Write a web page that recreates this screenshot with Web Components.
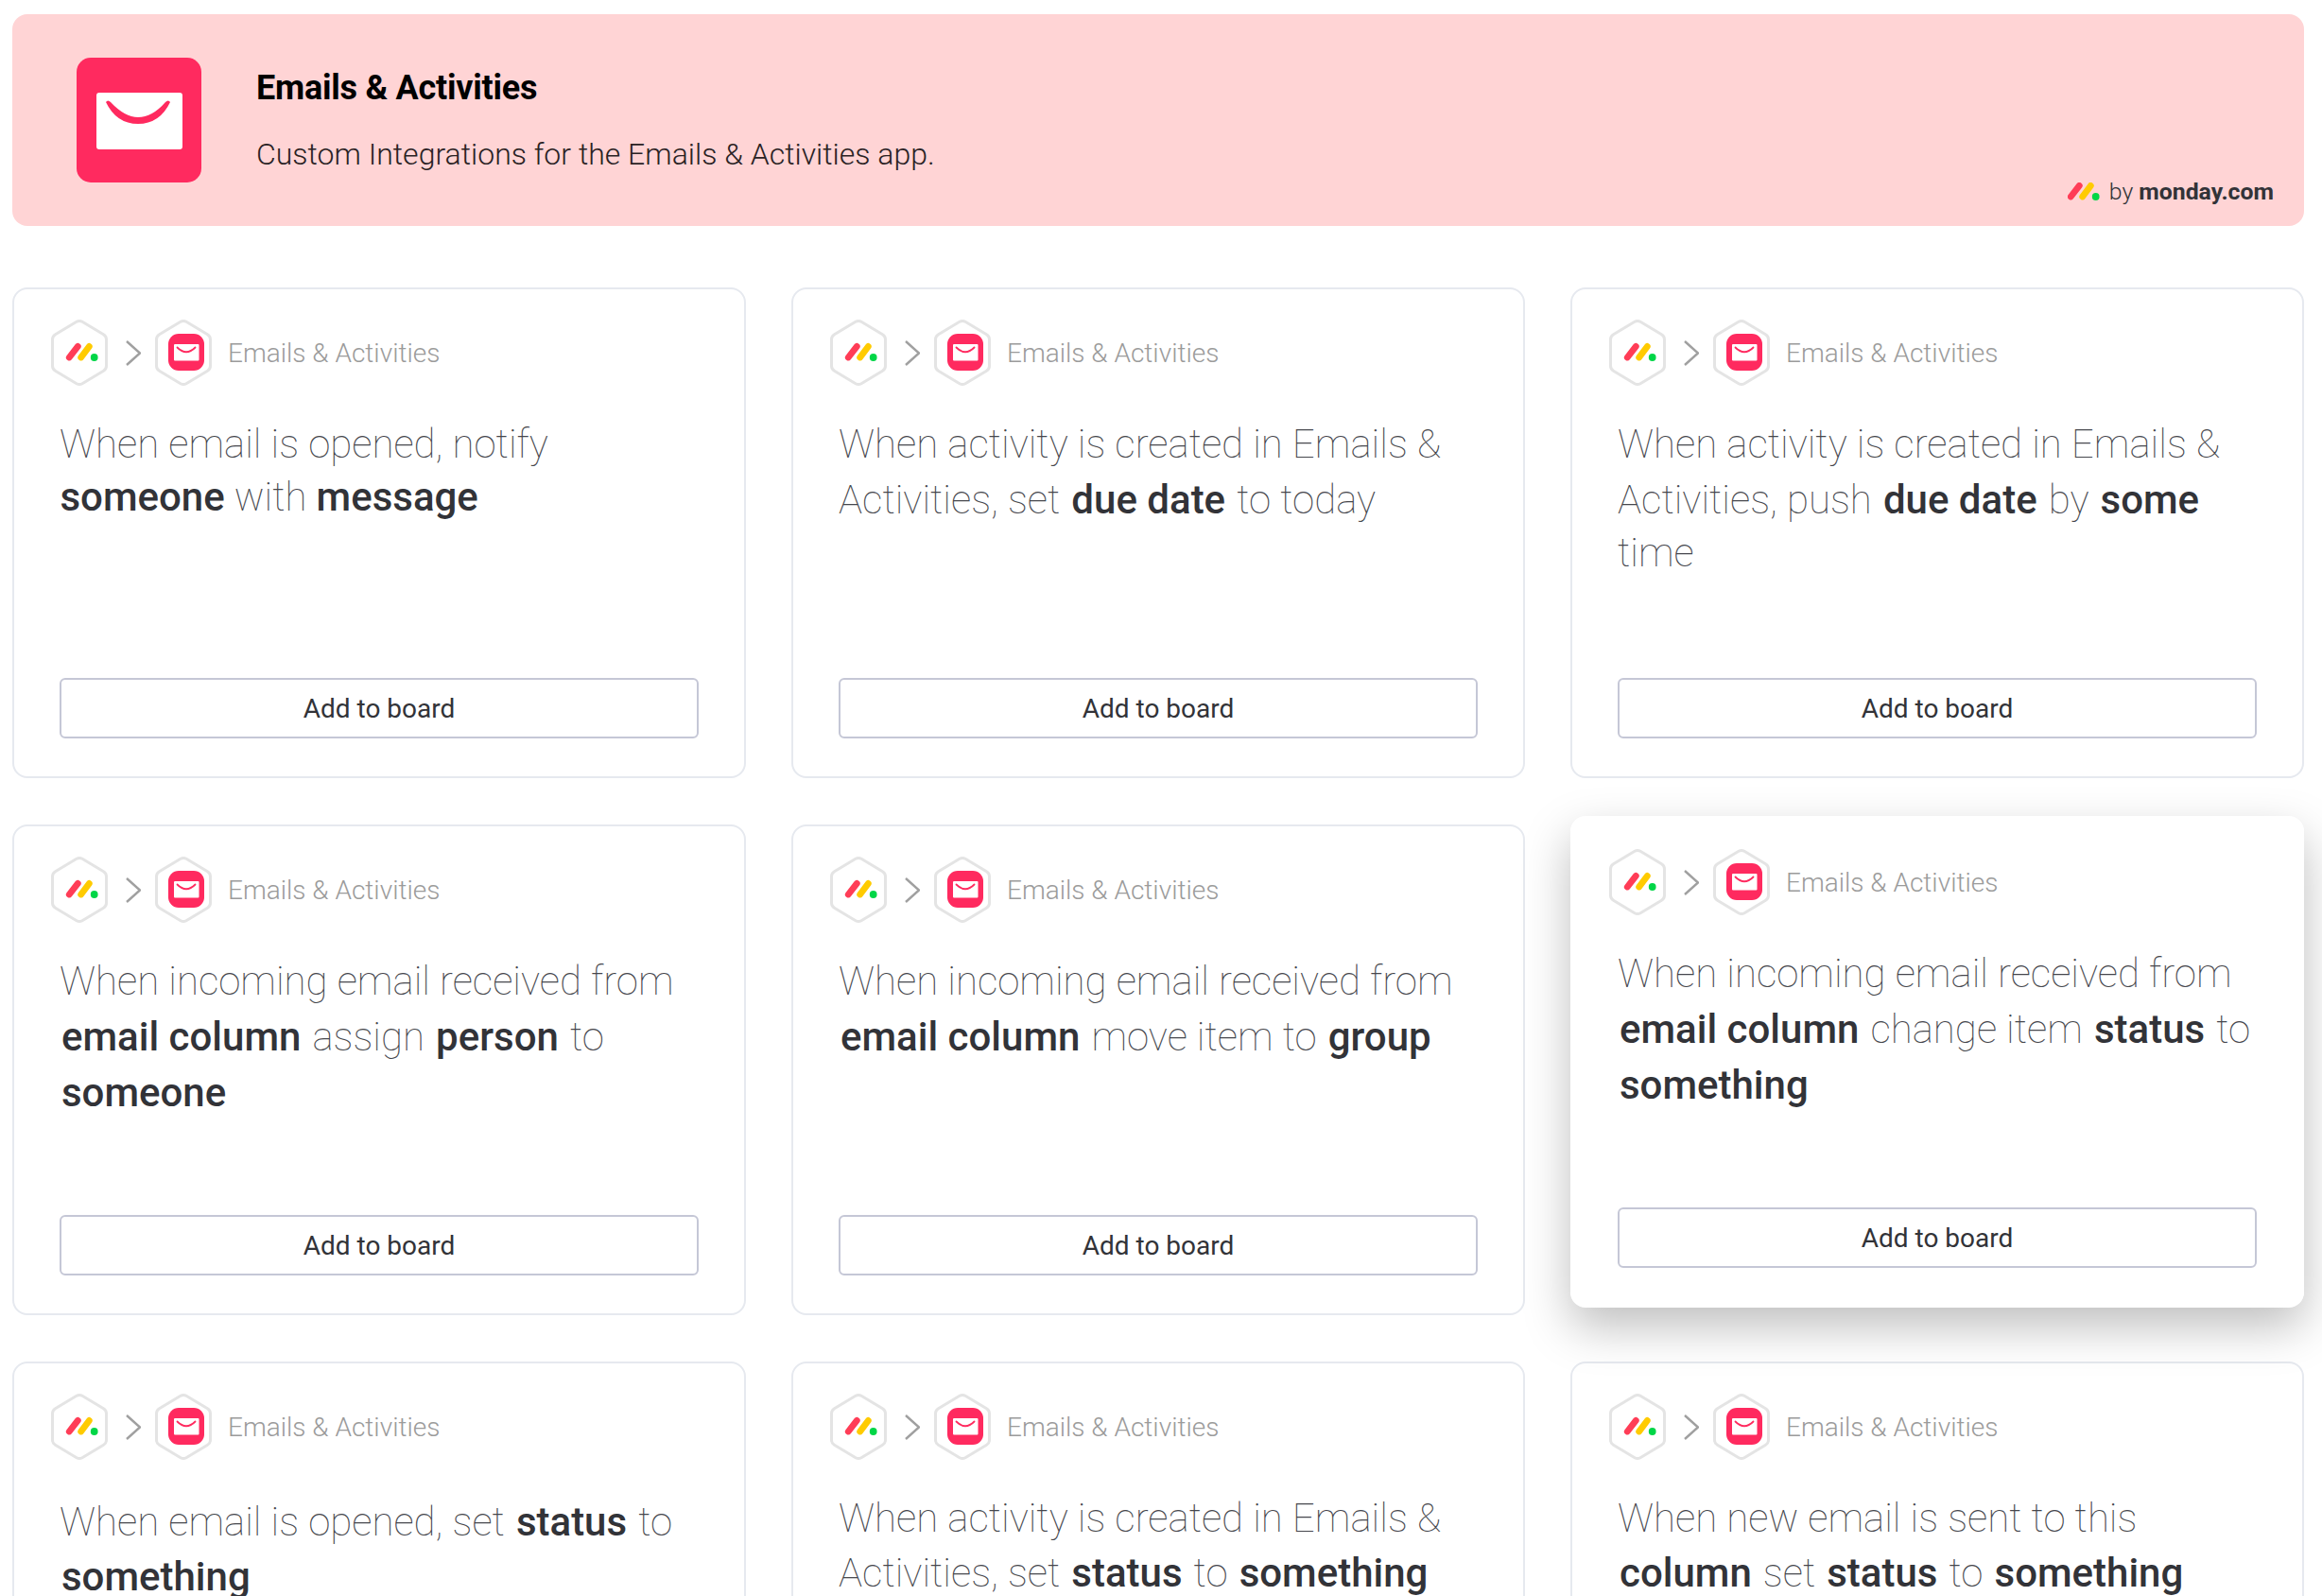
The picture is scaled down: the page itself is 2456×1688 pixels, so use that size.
<!DOCTYPE html>
<html>
<head>
<meta charset="utf-8">
<title>Emails &amp; Activities</title>
<style>
  html, body { margin: 0; height: 100%; overflow: hidden; background: #fff; }
  body { font-family: Roboto, "Liberation Sans", sans-serif; color: #323338; }
</style>
</head>
<body>
<integrations-page>
  <integrations-banner slot="banner" name="Emails &amp; Activities">Custom Integrations for the Emails &amp; Activities app.</integrations-banner>

  <recipe-card>When email is opened, notify <b class="n">someone</b> with <b>message</b></recipe-card>
  <recipe-card>When activity is created in Emails &amp; Activities, set <b class="t">due date</b> to today</recipe-card>
  <recipe-card>When activity is created in Emails &amp; Activities, push <b class="t">due date</b> by <b class="t">some</b> time</recipe-card>

  <recipe-card>When incoming email received from <b class="t">email column</b> assign <b class="t">person</b> to <b class="t">someone</b></recipe-card>
  <recipe-card>When incoming email received from <b class="t">email column</b> move item to <b class="t">group</b></recipe-card>
  <recipe-card raised>When incoming email received from <b class="t">email column</b> change item <b class="t">status</b> to <b class="t">something</b></recipe-card>

  <recipe-card>When email is opened, set <b class="u">status</b> to <b class="s">something</b></recipe-card>
  <recipe-card>When activity is created in Emails &amp; Activities, set <b class="m">status</b> to <b class="m">something</b></recipe-card>
  <recipe-card>When new email is sent to this <b class="m">column</b> set <b class="m">status</b> to <b class="m">something</b></recipe-card>
</integrations-page>

<script>
const ENVELOPE = `
  <rect x="14" y="15" width="38" height="39" rx="11" fill="#ff2a5f"/>
  <rect x="20" y="26" width="26.5" height="17.5" rx="1" fill="#fff"/>
  <path d="M23.5 29.5Q33 39 42.5 29.5" fill="none" stroke="#ff2a5f" stroke-width="1.8" stroke-linecap="round"/>`;

const MONDAY = `
  <path d="M3.3 15 12.3 3.4" stroke="#ff3d57" stroke-width="6.8" stroke-linecap="round"/>
  <path d="M15.7 15 24.3 3.4" stroke="#ffcb00" stroke-width="6.8" stroke-linecap="round"/>
  <circle cx="29.7" cy="15" r="3.9" fill="#00d647"/>`;

class AppBadge extends HTMLElement {
  connectedCallback() {
    const inner = this.getAttribute('kind') === 'monday'
      ? `<g transform="translate(16 25)">${MONDAY}</g>`
      : ENVELOPE;
    this.attachShadow({ mode: 'open' }).innerHTML = `
      <style>
        :host { display: block; width: 60px; height: 70px; flex: none; }
        svg { display: block; overflow: visible; }
      </style>
      <svg width="60" height="70" viewBox="0 0 60 70">
        <path d="M27 2.300Q30 .5 33 2.300L55.500 15.800Q58.500 17.600 58.500 21V49Q58.500 52.400 55.500 54.200L33 67.700Q30 69.500 27 67.700L4.500 54.200Q1.500 52.400 1.500 49V21Q1.500 17.600 4.500 15.800Z" fill="#fff" stroke="#e4e4e4" stroke-width="3"/>
        ${inner}
      </svg>`;
  }
}

class RecipeCard extends HTMLElement {
  constructor() {
    super();
    this.attachShadow({ mode: 'open' }).innerHTML = `
      <style>
        :host {
          display: flex;
          flex-direction: column;
          box-sizing: border-box;
          height: 519px;
          padding: 32px 48px 40px;
          background: #fff;
          border: 2px solid #e6e9ef;
          border-radius: 16px;
        }
        :host([raised]) {
          position: relative;
          transform: translateY(-8px);
          border-color: #fff;
          box-shadow: 0 -1px 0 #fff, 0 20px 50px rgba(0, 0, 0, .26);
        }
        .head { display: flex; align-items: center; margin-left: -9px; }
        .chevron { display: block; margin: 0 15px 0 19px; flex: none; }
        .app { margin-left: 17px; font-size: 28px; font-weight: 300; color: #9b9b9b; }
        .text { margin-top: 34px; font-size: 42px; line-height: 56px; font-weight: 100; color: #46474d; }
        ::slotted(b) { font-weight: 500; color: #323338; }
        ::slotted(b.n) { padding-left: .5px; }
        ::slotted(b.t) { display: inline-block; padding: 3px 2px 0; }
        ::slotted(b.u) { display: inline-block; padding: 4px 2px 0; }
        ::slotted(b.m) { display: inline-block; padding: 2px 2px 0; }
        ::slotted(b.s) { display: inline-block; padding: 2px 2px 0; }
        button {
          display: block;
          width: 100%;
          height: 64px;
          margin-top: auto;
          padding: 0;
          background: #fff;
          border: 2px solid #c5c7d6;
          border-radius: 6px;
          font: 400 28px Roboto, "Liberation Sans", sans-serif;
          color: #323338;
        }
      </style>
      <div class="head">
        <app-badge kind="monday"></app-badge>
        <svg class="chevron" width="16" height="27" viewBox="0 0 16 27"><path d="M1 1 15 13.500 1 26" fill="none" stroke="#a0a0a0" stroke-width="2.400"/></svg>
        <app-badge kind="emails"></app-badge>
        <span class="app">Emails &amp; Activities</span>
      </div>
      <div class="text"><slot></slot></div>
      <button type="button">Add to board</button>`;
  }
}

class IntegrationsBanner extends HTMLElement {
  constructor() {
    super();
    this.attachShadow({ mode: 'open' });
  }

  connectedCallback() {
    this.shadowRoot.innerHTML = `
      <style>
        :host {
          display: flex;
          align-items: center;
          box-sizing: border-box;
          height: 224px;
          padding: 0 32px 0 68px;
          background: #ffd4d5;
          border-radius: 16px;
          color: #000;
        }
        .icon { display: block; flex: none; }
        .copy { margin-left: 58px; display: flex; flex-direction: column; gap: 28px; margin-bottom: 1px; }
        h1 { margin: 0; font-size: 36px; line-height: 44px; font-weight: 700; letter-spacing: -.25px; }
        p { margin: 0; font-size: 32px; line-height: 40px; font-weight: 300; color: #2a2224; }
        .by { display: flex; align-items: center; margin-left: auto; align-self: flex-end; margin-bottom: 21px; font-size: 24.8px; line-height: 30px; font-weight: 300; color: #323338; }
        .by svg { margin-right: 10px; }
        .by b { font-weight: 700; }
      </style>
      <svg class="icon" width="132" height="132" viewBox="0 0 132 132">
        <rect width="132" height="132" rx="15" fill="#ff2a5f"/>
        <rect x="21" y="37" width="91" height="60" rx="3" fill="#fff"/>
        <path d="M31 47Q33 44 36 47Q51 63 65 63Q80 63 94 47Q97 44 99 47Q88 70 65 70Q42 70 31 47Z" fill="#ff2a5f"/>
      </svg>
      <div class="copy">
        <h1>${this.getAttribute('name').replace('&', '&amp;')}</h1>
        <p><slot></slot></p>
      </div>
      <div class="by">
        <svg width="34" height="20" viewBox="0 0 34 20">${MONDAY}</svg>
        <span>by&nbsp;<b>monday.com</b></span>
      </div>`;
  }
}

class IntegrationsPage extends HTMLElement {
  constructor() {
    super();
    this.attachShadow({ mode: 'open' }).innerHTML = `
      <style>
        :host { display: block; padding: 15px 19px 0 13px; }
        .grid { display: grid; grid-template-columns: repeat(3, 1fr); column-gap: 48px; row-gap: 49px; margin-top: 65px; }
      </style>
      <slot name="banner"></slot>
      <div class="grid"><slot></slot></div>`;
  }
}

customElements.define('app-badge', AppBadge);
customElements.define('recipe-card', RecipeCard);
customElements.define('integrations-banner', IntegrationsBanner);
customElements.define('integrations-page', IntegrationsPage);
</script>
</body>
</html>
